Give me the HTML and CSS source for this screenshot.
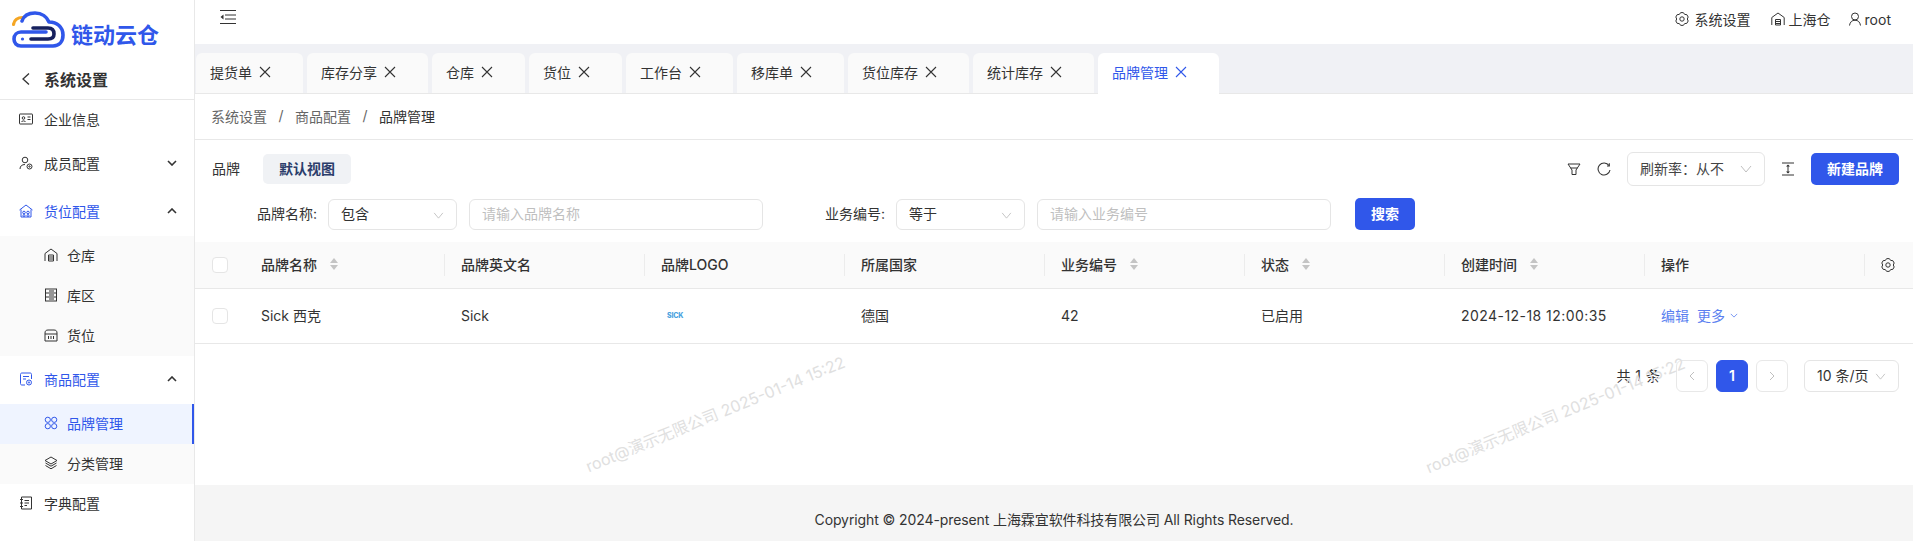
FILE: index.html
```html
<!DOCTYPE html>
<html lang="zh-CN">
<head>
<meta charset="utf-8">
<title>品牌管理</title>
<link rel="stylesheet" href="styles.css">
</head>
<body>
<div class="app">
  <aside class="sidebar">
    <div class="logo">
      <svg class="logo-mark" width="56" height="40" viewBox="0 0 56 40" fill="none">
        <path d="M1.5 13.5C2 9 6 6.5 10.5 6.5" stroke="#f5a623" stroke-width="3.2" stroke-linecap="round"/>
        <path d="M10 10C12 4 18 2 23 2C30 2 35 6 37 11C45 11 51 16 51 24C51 31 47 35 41 35L9 35C4.500 35 2 32 2 28C2 24 5 21 9 21L34 21" stroke="#3057ea" stroke-width="3.6" stroke-linecap="round" stroke-linejoin="round"/>
        <path d="M19 28L36 28C40 28 42 26 42 23C42 19 40 17 36 17L21 17" stroke="#17215e" stroke-width="3.6" stroke-linecap="round"/>
        <circle cx="10.500" cy="28" r="1.600" fill="#3057ea"/>
      </svg>
      <span class="logo-text">链动云仓</span>
    </div>
    <div class="back">
      <svg width="10" height="14" viewBox="0 0 10 14" fill="none"><path d="M8 1.500L2 7L8 12.500" stroke="#333" stroke-width="1.300"/></svg>
      <span>系统设置</span>
    </div>
    <nav class="menu">
      <a class="item gap4">
        <svg class="ic" viewBox="0 0 14 14" fill="none" stroke="currentColor"><rect x="0.500" y="2" width="13" height="10" rx="0.500"/><circle cx="4.500" cy="6" r="1.300"/><path d="M2.500 10c.3-1.500 3.700-1.500 4 0M8.500 5h3M8.500 7.500h3"/></svg>
        <span>企业信息</span>
      </a>
      <a class="item gap8">
        <svg class="ic" viewBox="0 0 14 14" fill="none" stroke="currentColor"><circle cx="6" cy="4" r="2.800"/><path d="M1 13c0-3 2-4.500 5-4.500"/><circle cx="10.500" cy="10.500" r="2.500"/><circle cx="10.500" cy="10.500" r="0.700"/></svg>
        <span>成员配置</span>
        <svg class="chev" viewBox="0 0 10 6" fill="none"><path d="M1 1L5 5L9 1" stroke="#333" stroke-width="1.600"/></svg>
      </a>
      <a class="item on gap4">
        <svg class="ic" viewBox="0 0 14 14" fill="none" stroke="currentColor"><path d="M0.500 6L7 1L13.500 6M2 5.500V13H12V5.500"/><circle cx="5" cy="8.500" r="1.300"/><circle cx="9" cy="8.500" r="1.300"/><circle cx="5" cy="11.500" r="1"/><circle cx="9" cy="11.500" r="1"/></svg>
        <span>货位配置</span>
        <svg class="chev up" viewBox="0 0 10 6" fill="none"><path d="M1 5L5 1L9 5" stroke="#333" stroke-width="1.600"/></svg>
      </a>
      <div class="sub gap4">
        <a class="subitem">
          <svg class="ic" viewBox="0 0 14 14" fill="none" stroke="currentColor"><path d="M1 5.500L7 1L13 5.500V13M1 5.500V13M4.500 7h5v6h-5zM4.500 9h5M4.500 11h5"/></svg>
          <span>仓库</span>
        </a>
        <a class="subitem">
          <svg class="ic" viewBox="0 0 14 14" fill="none" stroke="currentColor"><rect x="1.500" y="1" width="11" height="12"/><path d="M1.500 5h11M1.500 9h11M5 3h5M5 7h5M5 11h5"/></svg>
          <span>库区</span>
        </a>
        <a class="subitem">
          <svg class="ic" viewBox="0 0 14 14" fill="none" stroke="currentColor"><path d="M1 13V5C1 3 2 2 4 2H10C12 2 13 3 13 5V13ZM1 6H13M4.500 8v3M7 8v3M9.500 8v3"/></svg>
          <span>货位</span>
        </a>
      </div>
      <a class="item on gap4">
        <svg class="ic" viewBox="0 0 14 14" fill="none" stroke="currentColor"><path d="M6 13H3C2 13 1.500 12.500 1.500 11.500V2.500C1.500 1.500 2 1 3 1H11C12 1 12.500 1.500 12.500 2.500V7M4 4.500h6M4 7h3"/><circle cx="10" cy="10.500" r="2.500"/><circle cx="10" cy="10.500" r="0.700"/></svg>
        <span>商品配置</span>
        <svg class="chev up" viewBox="0 0 10 6" fill="none"><path d="M1 5L5 1L9 5" stroke="#333" stroke-width="1.600"/></svg>
      </a>
      <div class="sub">
        <a class="subitem active">
          <svg class="ic" viewBox="0 0 14 14" fill="none" stroke="currentColor"><circle cx="3.800" cy="3.800" r="2.600"/><circle cx="10.200" cy="3.800" r="2.600"/><circle cx="3.800" cy="10.200" r="2.600"/><circle cx="10.200" cy="10.200" r="2.600"/></svg>
          <span>品牌管理</span>
        </a>
        <a class="subitem">
          <svg class="ic" viewBox="0 0 14 14" fill="none" stroke="currentColor"><path d="M7 1L13 4.500L7 8L1 4.500ZM1.500 7L7 10.200L12.500 7M1.500 9.500L7 12.800L12.500 9.500"/></svg>
          <span>分类管理</span>
        </a>
      </div>
      <a class="item">
        <svg class="ic" viewBox="0 0 14 14" fill="none" stroke="currentColor"><path d="M2.500 1H12.500V13H2.500ZM1 3.500H4M1 7H4M1 10.500H4M5.500 4.500H10M5.500 7H10M5.500 9.500H8"/></svg>
        <span>字典配置</span>
      </a>
    </nav>
  </aside>

  <main class="main">
    <header class="topbar">
      <svg class="collapse" width="16" height="14" viewBox="0 0 16 14" fill="none" stroke="#333"><path d="M0 0.500H16M5 5H16M5 9H16M0 13.500H16"/><path d="M3.500 4.500V9.500L0.500 7Z" fill="#333" stroke="none"/></svg>
      <div class="top-right">
        <span class="top-link settings">
          <svg class="ic" viewBox="0 0 14 14" fill="none" stroke="#333" stroke-linejoin="round"><path d="M5.650 0.640H8.350L9.650 2.410L11.830 2.650L13.180 4.990L12.300 7L13.180 9.010L11.830 11.350L9.650 11.590L8.350 13.360H5.650L4.350 11.590L2.170 11.350L0.820 9.010L1.700 7L0.820 4.990L2.170 2.650L4.350 2.410Z"/><circle cx="7" cy="7" r="2.200"/></svg>
          系统设置
        </span>
        <span class="top-link wh">
          <svg class="ic" viewBox="0 0 14 14" fill="none" stroke="#333"><path d="M0.800 13V5.500L7 1L13.200 5.500V13M4.500 7.500h5V13h-5zM4.500 9.500h5M4.500 11.500h5"/></svg>
          上海仓
        </span>
        <span class="top-link user">
          <svg class="ic-user" viewBox="0 0 12 14" fill="none" stroke="#333"><circle cx="6" cy="4.500" r="3.500"/><path d="M0.500 13.500C1 10 3 8.200 6 8.200S11 10 11.500 13.500"/></svg>
          root
        </span>
      </div>
    </header>

    <div class="tabs">
      <div class="tab">提货单<svg class="x" viewBox="0 0 12 12"><path d="M1 1L11 11M11 1L1 11"/></svg></div>
      <div class="tab">库存分享<svg class="x" viewBox="0 0 12 12"><path d="M1 1L11 11M11 1L1 11"/></svg></div>
      <div class="tab">仓库<svg class="x" viewBox="0 0 12 12"><path d="M1 1L11 11M11 1L1 11"/></svg></div>
      <div class="tab">货位<svg class="x" viewBox="0 0 12 12"><path d="M1 1L11 11M11 1L1 11"/></svg></div>
      <div class="tab">工作台<svg class="x" viewBox="0 0 12 12"><path d="M1 1L11 11M11 1L1 11"/></svg></div>
      <div class="tab">移库单<svg class="x" viewBox="0 0 12 12"><path d="M1 1L11 11M11 1L1 11"/></svg></div>
      <div class="tab">货位库存<svg class="x" viewBox="0 0 12 12"><path d="M1 1L11 11M11 1L1 11"/></svg></div>
      <div class="tab">统计库存<svg class="x" viewBox="0 0 12 12"><path d="M1 1L11 11M11 1L1 11"/></svg></div>
      <div class="tab current">品牌管理<svg class="x" viewBox="0 0 12 12"><path d="M1 1L11 11M11 1L1 11"/></svg></div>
    </div>

    <div class="crumbs">
      <span class="crumb">系统设置</span><span class="sep">/</span>
      <span class="crumb">商品配置</span><span class="sep">/</span>
      <span class="crumb last">品牌管理</span>
    </div>

    <section class="content">
      <div class="toolbar">
        <span class="title">品牌</span>
        <span class="view">默认视图</span>
        <div class="tools">
          <svg class="tool filter" viewBox="0 0 14 14" fill="none" stroke="#333"><path d="M1 2H13L9 8V12.500H5V8ZM3.500 6H10.500"/></svg>
          <svg class="tool refresh" viewBox="0 0 14 14" fill="none" stroke="#333" stroke-width="1.100"><path d="M12 3.500A6 6 0 1 0 13 8"/><path d="M12.300 1.200V4H10"/></svg>
          <div class="select refresh-rate">
            <span class="value">刷新率：从不</span>
            <svg class="arrow big" viewBox="0 0 12 8" fill="none"><path d="M1 1L6 7L11 1"/></svg>
          </div>
          <svg class="tool height" viewBox="0 0 14 14" fill="none" stroke="#333"><path d="M1 1H13M1 13H13M7 3V11"/><path d="M5 4.500L7 2.500L9 4.500ZM5 9.500L7 11.500L9 9.500Z" fill="#333" stroke="none"/></svg>
          <button class="btn new">新建品牌</button>
        </div>
      </div>

      <div class="search">
        <label class="lab">品牌名称:</label>
        <div class="select cond"><span class="value">包含</span><svg class="arrow" viewBox="0 0 12 8" fill="none"><path d="M1 1L6 7L11 1"/></svg></div>
        <input class="inp" placeholder="请输入品牌名称">
        <label class="lab second">业务编号:</label>
        <div class="select cond"><span class="value">等于</span><svg class="arrow" viewBox="0 0 12 8" fill="none"><path d="M1 1L6 7L11 1"/></svg></div>
        <input class="inp" placeholder="请输入业务编号">
        <button class="btn find">搜索</button>
      </div>

      <div class="table">
        <div class="row head">
          <div class="cell check"><span class="box"></span></div>
          <div class="cell first">品牌名称<span class="sort"><i class="t"></i><i class="b"></i></span></div>
          <div class="cell">品牌英文名</div>
          <div class="cell">品牌LOGO</div>
          <div class="cell">所属国家</div>
          <div class="cell">业务编号<span class="sort"><i class="t"></i><i class="b"></i></span></div>
          <div class="cell">状态<span class="sort"><i class="t"></i><i class="b"></i></span></div>
          <div class="cell">创建时间<span class="sort"><i class="t"></i><i class="b"></i></span></div>
          <div class="cell">操作</div>
          <div class="cell gear">
            <svg class="ic" viewBox="0 0 14 14" fill="none" stroke="#333" stroke-linejoin="round"><path d="M5.650 0.640H8.350L9.650 2.410L11.830 2.650L13.180 4.990L12.300 7L13.180 9.010L11.830 11.350L9.650 11.590L8.350 13.360H5.650L4.350 11.590L2.170 11.350L0.820 9.010L1.700 7L0.820 4.990L2.170 2.650L4.350 2.410Z"/><circle cx="7" cy="7" r="2.200"/></svg>
          </div>
        </div>
        <div class="row body">
          <div class="cell check"><span class="box"></span></div>
          <div class="cell">Sick 西克</div>
          <div class="cell">Sick</div>
          <div class="cell"><span class="sick">SICK</span></div>
          <div class="cell">德国</div>
          <div class="cell">42</div>
          <div class="cell">已启用</div>
          <div class="cell date">2024-12-18 12:00:35</div>
          <div class="cell acts"><a>编辑</a><a>更多</a><svg class="mini" viewBox="0 0 10 6" fill="none"><path d="M1 1L5 5L9 1"/></svg></div>
          <div class="cell"></div>
        </div>
      </div>

      <div class="pager">
        <span class="total">共 1 条</span>
        <span class="pg"><svg class="pg-ic" viewBox="0 0 6 10" fill="none"><path d="M5 1L1 5L5 9"/></svg></span>
        <span class="pg cur">1</span>
        <span class="pg"><svg class="pg-ic" viewBox="0 0 6 10" fill="none"><path d="M1 1L5 5L1 9"/></svg></span>
        <div class="select size"><span class="value">10 条/页</span><svg class="arrow" viewBox="0 0 12 8" fill="none"><path d="M1 1L6 7L11 1"/></svg></div>
      </div>

      <span class="mark m1">root@演示无限公司 2025-01-14 15:22</span>
      <span class="mark m2">root@演示无限公司 2025-01-14 15:22</span>
    </section>

    <footer class="footer">Copyright © 2024-present 上海霖宜软件科技有限公司 All Rights Reserved.</footer>
  </main>
</div>
</body>
</html>
```

FILE: styles.css
```css
* { box-sizing: border-box; }
html, body { margin: 0; height: 100%; overflow: hidden; }
body {
  font-family: Inter, "Noto Sans CJK SC", sans-serif;
  font-size: 14px;
  color: #333;
  background: #fff;
}
.app { display: flex; height: 541px; }

/* sidebar */
.sidebar { width: 195px; flex: none; border-right: 1px solid #e8e8e8; display: flex; flex-direction: column; }
.logo { height: 59px; position: relative; display: flex; align-items: flex-start; padding: 11px 0 0 12px; }
.logo-mark { flex: none; }
.logo-text { font-size: 22px; line-height: 30px; font-weight: 700; color: #3057ea; margin: 9px 0 0 3px; letter-spacing: 0; white-space: nowrap; }
.back { height: 41px; border-bottom: 1px solid #e8e8e8; display: flex; align-items: center; padding: 0 0 1px 21px; font-size: 16px; font-weight: 700; color: #333; gap: 13px; }
.menu { display: flex; flex-direction: column; }
.item { height: 40px; display: flex; align-items: center; padding: 0 0 2px 19px; gap: 11px; position: relative; }
.item.on { color: #3057ea; }
.gap4 { margin-bottom: 4px; }
.gap8 { margin-bottom: 8px; }
.ic { width: 14px; height: 14px; flex: none; }
.ic-user { width: 12px; height: 14px; flex: none; }
.chev { width: 10px; height: 6px; position: absolute; right: 17px; top: 16px; }
.sub { background: #fafafa; display: flex; flex-direction: column; }
.subitem { height: 40px; display: flex; align-items: center; padding: 0 0 2px 44px; gap: 9px; }
.subitem.active { background: #eff4ff; color: #3057ea; border-right: 2px solid #3057ea; }

/* main */
.main { flex: 1; min-width: 0; display: flex; flex-direction: column; }
.topbar { height: 44px; flex: none; display: flex; align-items: flex-start; padding: 10px 22px 0 25px; }
.top-right { margin-left: auto; display: flex; align-items: center; height: 20px; }
.top-link { display: flex; align-items: center; white-space: nowrap; padding-bottom: 2px; }
.settings { gap: 6px; margin-right: 20px; }
.wh { gap: 4px; margin-right: 18px; }
.user { gap: 4px; }

.tabs { height: 50px; flex: none; background: #f0f1f5; padding: 9px 0 0 1px; display: flex; gap: 4px; box-shadow: inset 0 -1px 0 #e8e8e8; }
.tab { height: 40px; background: #fafafa; border-radius: 6px 6px 0 0; padding: 0 32px 2px 14px; display: flex; align-items: center; gap: 7px; white-space: nowrap; }
.tab.current { background: #fff; color: #3057ea; height: 41px; padding-bottom: 3px; }
.x { width: 12px; height: 12px; flex: none; fill: none; stroke: #333; stroke-width: 1.100; }
.current .x { stroke: #3057ea; }

.crumbs { height: 46px; flex: none; border-bottom: 1px solid #e8e8e8; display: flex; align-items: center; padding: 0 0 2px 16px; color: #666; }
.sep { margin: 0 11.500px; }
.crumb.last { color: #333; }

.content { flex: 1; min-height: 0; position: relative; overflow: hidden; }
.toolbar { display: flex; align-items: center; height: 34px; margin-top: 12px; padding: 0 14px 0 17px; }
.title { width: 51px; padding-bottom: 2px; }
.view { width: 88px; height: 30px; background: #f0f2f5; border-radius: 5px; color: #2b3d6b; font-weight: 700; display: flex; align-items: center; justify-content: center; padding-bottom: 2px; }
.tools { margin-left: auto; display: flex; align-items: center; }
.tool { width: 14px; height: 14px; flex: none; }
.filter { margin-right: 16px; }
.refresh { margin-right: 16px; }
.height { margin: 0 16px; }
.select { height: 32px; border: 1px solid #e5e5e5; border-radius: 6px; background: #fff; display: flex; align-items: center; padding: 0 0 2px 12px; position: relative; }
.refresh-rate { width: 138px; height: 34px; color: #444; }
.arrow { width: 11px; height: 7px; stroke: #bfbfbf; position: absolute; right: 12px; top: 12px; }
.arrow path { stroke: inherit; }
.arrow.big { width: 12px; height: 8px; right: 12px; }
.btn { border: 0; background: #3057ea; color: #fff; font: inherit; font-weight: 600; border-radius: 5px; padding: 0 0 2px; }
.new { width: 88px; height: 32px; }

.search { display: flex; align-items: center; height: 32px; margin-top: 12px; padding-left: 62px; }
.lab { width: 71px; flex: none; white-space: nowrap; padding-bottom: 2px; }
.lab.second { margin-left: 62px; }
.cond { width: 129px; flex: none; margin-right: 12px; height: 31px; }
.inp { width: 294px; height: 31px; flex: none; border: 1px solid #e5e5e5; border-radius: 6px; padding: 0 12px 2px; font: inherit; color: #333; outline: none; }
.inp::placeholder { color: #bfbfbf; }
.find { width: 60px; height: 32px; margin-left: 24px; }

.table { margin-top: 12px; }
.row { display: grid; grid-template-columns: 49px repeat(7, 200px) 220px 49px; border-bottom: 1px solid #e8e8e8; }
.head { height: 47px; background: #fafafa; font-weight: 500; }
.body { height: 55px; }
.cell { display: flex; align-items: center; padding: 0 0 2px 17px; white-space: nowrap; position: relative; }
.check { padding-bottom: 0; }
.head .cell + .cell::before { content: ""; position: absolute; left: 0; top: 12px; height: 22px; width: 1px; background: #ececec; }
.head .cell.first::before { display: none; }
.box { width: 16px; height: 16px; border: 1px solid #e5e5e5; border-radius: 4px; background: #fff; }
.sort { display: flex; flex-direction: column; gap: 2px; margin-left: 13px; }
.sort i { display: block; width: 0; height: 0; border-left: 4px solid transparent; border-right: 4px solid transparent; }
.sort .t { border-bottom: 5px solid #c4c4c4; }
.sort .b { border-top: 5px solid #c4c4c4; }
.gear { padding-bottom: 0; }
.sick { font-size: 7px; font-weight: 800; color: #4aa3df; margin-left: 6px; letter-spacing: -0.200px; }
.date { letter-spacing: 0.450px; }
.acts a { color: #5a7ff0; margin-right: 8px; }
.acts a + a { margin-right: 5px; }
.mini { width: 8px; height: 5px; stroke: #5a7ff0; }
.mini path { stroke: inherit; }

.pager { display: flex; align-items: center; justify-content: flex-end; margin-top: 16px; padding-right: 14px; }
.total { margin-right: 16px; word-spacing: 1px; padding-bottom: 2px; }
.pg { width: 32px; height: 32px; border: 1px solid #e8e8e8; border-radius: 6px; display: flex; align-items: center; justify-content: center; margin-right: 8px; }
.pg.cur { background: #3057ea; border-color: #3057ea; color: #fff; font-weight: 600; padding-bottom: 2px; }
.pg-ic { width: 6px; height: 10px; stroke: #bfbfbf; }
.pg-ic path { stroke: inherit; }
.size { width: 95px; margin-left: 8px; }

.mark { position: absolute; font-size: 16px; color: #e0e0e0; white-space: nowrap; transform: rotate(-22.3deg); pointer-events: none; line-height: 20px; }
.m1 { left: 381px; top: 264px; }
.m2 { left: 1221px; top: 265px; }

.footer { height: 56px; flex: none; background: #f5f5f5; display: flex; justify-content: center; padding-top: 25px; line-height: 20px; letter-spacing: -0.100px; }
```
